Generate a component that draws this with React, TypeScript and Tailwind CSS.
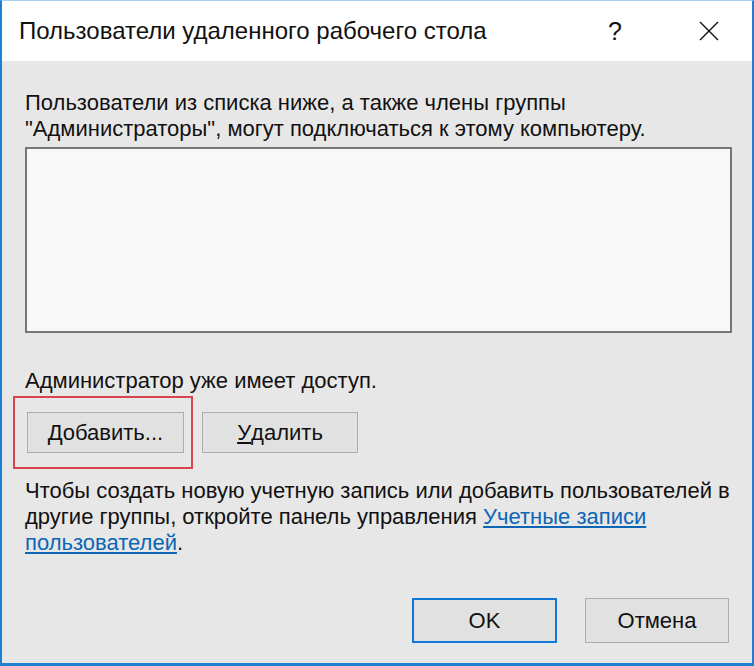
export default function App() {
  return (
    <div className="flex h-[666px] w-[754px] flex-col border-x-2 border-b-[3px] border-t border-[#1f80d2] border-t-[#a9cff0] font-['Liberation_Sans',Arial,sans-serif] text-[#111]">
      {/* title bar */}
      <div className="flex h-[60px] shrink-0 items-center bg-white pl-[17px]">
        <span className="text-[24px] leading-none">Пользователи удаленного рабочего стола</span>
        <span className="ml-auto mr-[77px] text-[25px] font-light leading-none">?</span>
        <svg className="mr-[33px] h-[20px] w-[20px]" viewBox="0 0 20 20" fill="none" stroke="#111" strokeWidth="1.4">
          <path d="M1 1 L19 19 M19 1 L1 19" />
        </svg>
      </div>

      {/* body */}
      <div className="flex flex-1 flex-col bg-[#e8e7e7] pl-[23px] pr-[20px] pb-[20px] text-[22px] leading-[26px]">
        <p className="mt-[29px] whitespace-nowrap">
          Пользователи из списка ниже, а также члены группы
          <br />
          "Администраторы", могут подключаться к этому компьютеру.
        </p>

        <div className="mt-[5px] h-[186px] shrink-0 border-2 border-[#767676] bg-[#f8f8f8]" />

        <p className="mt-[35px]">Администратор уже имеет доступ.</p>

        <div className="mt-[2px] flex items-start">
          <div className="-ml-[12px] border-2 border-[#d64550] pb-[14px] pl-[12px] pr-[7px] pt-[14px]">
            <button className="flex h-[41px] w-[157px] items-center justify-center border border-[#adadad] bg-[#e1e1e1] text-[22px]">
              <span className="underline">Д</span>обавить...
            </button>
          </div>
          <button className="ml-[9px] mt-[16px] flex h-[41px] w-[156px] items-center justify-center border border-[#adadad] bg-[#e1e1e1] text-[22px]">
            <span className="underline">У</span>далить
          </button>
        </div>

        <p className="mt-[9px] whitespace-nowrap">
          Чтобы создать новую учетную запись или добавить пользователей в
          <br />
          другие группы, откройте панель управления{' '}
          <a className="text-[#0b66b5] underline">
            Учетные записи
            <br />
            пользователей
          </a>
          .
        </p>

        <div className="mt-auto flex justify-end gap-[28px] pr-[3px]">
          <button className="flex h-[45px] w-[145px] items-center justify-center border-2 border-[#0f78d6] bg-[#e1e1e1] text-[22px]">
            OK
          </button>
          <button className="flex h-[45px] w-[144px] items-center justify-center border border-[#adadad] bg-[#e1e1e1] text-[22px]">
            Отмена
          </button>
        </div>
      </div>
    </div>
  );
}
